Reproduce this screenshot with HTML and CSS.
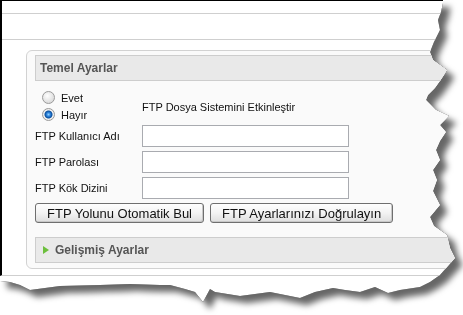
FILE: index.html
```html
<!DOCTYPE html>
<html lang="tr">
<head>
    <meta charset="UTF-8">
    <title>FTP Ayarları</title>
    <link rel="stylesheet" href="styles.css">
</head>
<body>
    <div class="sheet">
        <div class="page">
            <div class="frame">
                <div class="topbar"></div>
                <div class="subbar"></div>
                <div class="content">
                    <div class="panel">
                        <div class="panel-head">Temel Ayarlar</div>

                        <div class="enable-row">
                            <div class="radios">
                                <label class="radio"><input type="radio" name="ftp"> Evet</label>
                                <label class="radio"><input type="radio" name="ftp" checked> Hayır</label>
                            </div>
                            <div class="enable-text">FTP Dosya Sistemini Etkinleştir</div>
                        </div>

                        <div class="field">
                            <label class="field-label">FTP Kullanıcı Adı</label>
                            <input class="field-input" type="text">
                        </div>
                        <div class="field">
                            <label class="field-label">FTP Parolası</label>
                            <input class="field-input" type="password">
                        </div>
                        <div class="field">
                            <label class="field-label">FTP Kök Dizini</label>
                            <input class="field-input" type="text">
                        </div>

                        <div class="buttons">
                            <button class="btn">FTP Yolunu Otomatik Bul</button>
                            <button class="btn">FTP Ayarlarınızı Doğrulayın</button>
                        </div>

                        <div class="panel-head advanced"><span class="arrow"></span>Gelişmiş Ayarlar</div>
                    </div>
                </div>
            </div>
        </div>
    </div>
</body>
</html>
```

FILE: styles.css
```css
/* page */
body {
    margin: 0;
    background: #fff;
    font-family: 'Liberation Sans', Arial, sans-serif;
    font-size: 11px;
    color: #111;
}

/* torn paper piece + shadow */
.sheet {
    width: 463px;
    height: 315px;
    filter: drop-shadow(0 0 0.6px rgba(0, 0, 0, 0.95)) drop-shadow(7px 7px 3px rgba(0, 0, 0, 0.6));
}

.page {
    width: 463px;
    height: 315px;
    background: #fff;
    overflow: hidden;
    clip-path: polygon(0 0, 443px 0, 443px 3px, 441px 12px, 438px 20px, 440px 30px, 434px 42px, 430px 52px,
        433px 60px, 447px 70px, 444px 75px, 440px 81px, 435px 88px, 428px 95px, 426px 100px, 436px 110px,
        449px 116px, 440px 125px, 446px 132px, 440px 141px, 436px 150px, 440px 160px, 433px 170px,
        437px 180px, 433px 191px, 440px 205px, 430px 217px, 434px 226px, 447px 235px, 450px 248px,
        455px 258px, 448px 266px, 440px 275px, 430px 282px, 420px 287px, 400px 290px, 388px 293px,
        375px 287px, 360px 292px, 345px 290px, 333px 288px, 315px 292px, 300px 298px, 270px 292px,
        240px 296px, 215px 292px, 210px 289px, 203px 302px, 195px 292px, 185px 289px, 170px 285px,
        160px 285px, 130px 284px, 100px 285px, 60px 286px, 30px 290px, 20px 285px, 10px 282px, 0 281px);
}

.frame {
    border-top: 1px solid #000;
    border-left: 2px solid #000;
    border-bottom: 1px solid #cfcfcf;
}

.topbar {
    height: 12px;
    border-bottom: 1px solid #cfcfcf;
}

.subbar {
    height: 25px;
    border-bottom: 1px solid #cfcfcf;
}

.content {
    padding: 10px 0 6px 24px;
}

/* settings box */
.panel {
    margin-right: -40px;
    padding: 4px 8px 5px 8px;
    background: #fafafa;
    border: 1px solid #d2d2d2;
    border-radius: 6px;
}

.panel-head {
    height: 24px;
    line-height: 24px;
    padding-left: 4px;
    background: #e9e9e9;
    border: 1px solid #cdcdcd;
    font-size: 12px;
    font-weight: bold;
    color: #555;
}

.enable-row {
    display: flex;
    align-items: center;
    margin-top: 8px;
}

.radios {
    width: 107px;
}

.radio {
    display: flex;
    align-items: center;
    gap: 6px;
    height: 17px;
    padding-left: 7px;
}

.radio input {
    appearance: none;
    margin: 0;
    width: 13px;
    height: 13px;
    border-radius: 50%;
    border: 1px solid #9a9a9a;
    background: radial-gradient(circle at 40% 35%, #fff 0, #eee 35%, #cfcfcf 100%);
}

.radio input:checked {
    background: radial-gradient(circle at 50% 50%, #8fd0ff 0, #2a7fd8 2px, #0a4f9c 3.5px, #f2f2f2 4.5px, #d6d6d6 100%);
}

.enable-text {
    padding-top: 1px;
}

.field {
    display: flex;
    align-items: center;
    margin-top: 4px;
}

.enable-row + .field {
    margin-top: 2px;
}

.field-label {
    width: 107px;
}

.field-input {
    box-sizing: border-box;
    width: 207px;
    height: 22px;
    margin: 0;
    border: 1px solid #a9abb0;
    background: #fff;
}

.buttons {
    display: flex;
    gap: 6px;
    margin-top: 4px;
}

.btn {
    height: 20px;
    padding: 0 11px;
    font-family: 'Liberation Sans', Arial, sans-serif;
    font-size: 13px;
    color: #111;
    background: linear-gradient(#fefefe, #f3f3f3 50%, #dedede);
    border: 1px solid #6f6f6f;
    border-radius: 3px;
    box-shadow: inset -1px -1px 0 #c8c8c8;
}

.advanced {
    display: flex;
    align-items: center;
    margin-top: 14px;
    padding-left: 7px;
}

.arrow {
    width: 0;
    height: 0;
    margin-right: 6px;
    border-top: 4px solid transparent;
    border-bottom: 4px solid transparent;
    border-left: 6px solid #6cbf3c;
}
```
